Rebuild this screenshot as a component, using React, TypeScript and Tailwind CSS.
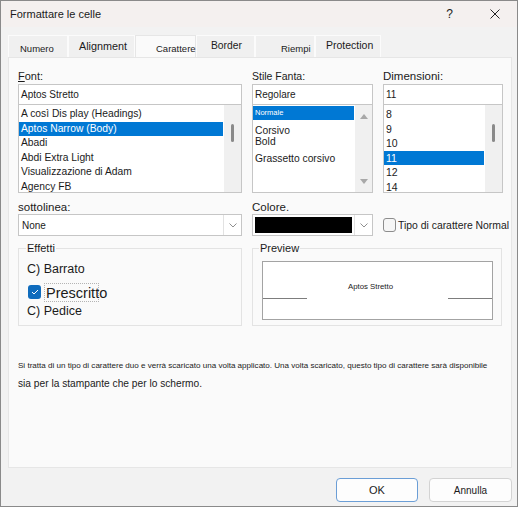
const fontList = [
  "A così Dis play (Headings)",
  "Aptos Narrow (Body)",
  "Abadi",
  "Abdi Extra Light",
  "Visualizzazione di Adam",
  "Agency FB",
];

const sizeList = ["8", "9", "10", "11", "12", "14"];

const tabs = [
  { label: "Numero", w: "w-[60px]", pl: "pl-[11px]", pt: "pt-[6px]", size: "text-[9.5px]" },
  { label: "Alignment", w: "w-[67px]", pl: "pl-[10px]", pt: "pt-[2px]", size: "text-[10.8px]" },
  { label: "Carattere", w: "w-[61px]", pl: "pl-[20px]", pt: "pt-[6px]", size: "text-[9.5px]", active: true },
  { label: "Border", w: "w-[59px]", pl: "pl-[14px]", pt: "pt-[2px]", size: "text-[10.3px]" },
  { label: "Riempi", w: "w-[60px]", pl: "pl-[25px]", pt: "pt-[6px]", size: "text-[9.5px]" },
  { label: "Protection", w: "w-[66px]", pl: "pl-[10px]", pt: "pt-[2px]", size: "text-[10.5px]" },
];

function Chevron() {
  return (
    <svg width="8" height="5" viewBox="0 0 8 5">
      <path d="M0.5 0.5 L4 4 L7.5 0.5" stroke="#8f8f8f" strokeWidth="1" fill="none" />
    </svg>
  );
}

function ThumbTrack() {
  return (
    <div className="w-[17px] bg-[#f0f0f0] flex flex-col items-center">
      <div className="mt-[19px] w-[3px] h-[18px] rounded-full bg-[#8a8a8a]" />
    </div>
  );
}

function ArrowTrack() {
  return (
    <div className="w-[17px] bg-[#f0f0f0] flex flex-col items-center justify-between pt-[9px] pb-[8px]">
      <svg width="8" height="5" viewBox="0 0 8 5">
        <path d="M0 5 L4 0 L8 5Z" fill="#a8a8a8" />
      </svg>
      <svg width="8" height="5" viewBox="0 0 8 5">
        <path d="M0 0 L4 5 L8 0Z" fill="#a8a8a8" />
      </svg>
    </div>
  );
}

export default function App() {
  return (
    <div className="w-[518px] h-[507px] bg-[#f2f2f2] border border-[#8a8a8a] flex flex-col overflow-hidden font-['Liberation_Sans',Arial,sans-serif] text-[#1b1b1b]">
      {/* Title bar */}
      <div className="h-[26px] bg-[#f4f0ef] flex items-center pl-[9px] pr-[17px]">
        <span className="text-[11px]">Formattare le celle</span>
        <span className="ml-auto text-[12px]">?</span>
        <svg className="ml-[37px]" width="10" height="10" viewBox="0 0 10 10">
          <path d="M0.5 0.5 L9.5 9.5 M9.5 0.5 L0.5 9.5" stroke="#222" strokeWidth="1" />
        </svg>
      </div>

      {/* Tabs */}
      <div className="mt-[8px] ml-[7px] flex h-[22px]">
        {tabs.map((t) => (
          <div
            key={t.label}
            className={
              t.active
                ? `${t.w} ${t.pl} ${t.pt} ${t.size} h-full bg-[#fafafa] border-x border-t border-[#e6e6e6] whitespace-nowrap`
                : `${t.w} ${t.pl} ${t.pt} ${t.size} h-full bg-[#f0f0f0] border-x border-t border-[#fbfbfb] whitespace-nowrap`
            }
          >
            {t.label}
          </div>
        ))}
      </div>

      {/* Panel */}
      <div className="ml-[7px] w-[504px] h-[411px] bg-[#fafafa] border border-[#e6e6e6] pt-[10px] px-[9px]">
        <div className="grid grid-cols-[224px_121px_120px] gap-x-[10px]">
          {/* Font */}
          <div>
            <div className="h-[16px] leading-[16px] text-[11px]">
              <span className="underline">F</span>ont:
            </div>
            <div className="h-[21px] bg-white border border-[#c6c6c6] px-[2px] flex items-center text-[10px]">
              Aptos Stretto
            </div>
            <div className="h-[88px] bg-white border border-t-0 border-[#c6c6c6] flex">
              <div className="flex-1 pt-[2px] text-[10.3px] whitespace-nowrap">
                {fontList.map((f, i) => (
                  <div
                    key={f}
                    className={
                      i === 1
                        ? "h-[14.5px] leading-[14.5px] pl-[2px] bg-[#0078d4] text-white mr-[1px]"
                        : "h-[14.5px] leading-[14.5px] pl-[2px]"
                    }
                  >
                    {f}
                  </div>
                ))}
              </div>
              <ThumbTrack />
            </div>
          </div>

          {/* Style */}
          <div>
            <div className="h-[16px] leading-[16px] text-[10.5px]">Stile Fanta:</div>
            <div className="h-[21px] bg-white border border-[#c6c6c6] px-[2px] flex items-center text-[10px]">
              Regolare
            </div>
            <div className="h-[88px] bg-white border border-t-0 border-[#c6c6c6] flex">
              <div className="flex-1 pt-[1px] text-[10.3px] whitespace-nowrap">
                <div className="h-[14px] leading-[14px] pl-[2px] bg-[#0078d4] text-white text-[7.5px] mr-[1px]">
                  Normale
                </div>
                <div className="mt-[5px] h-[11px] leading-[11px] pl-[2px]">Corsivo</div>
                <div className="h-[12px] leading-[12px] pl-[2px]">Bold</div>
                <div className="h-[22px] leading-[22px] pl-[2px]">Grassetto corsivo</div>
              </div>
              <ArrowTrack />
            </div>
          </div>

          {/* Size */}
          <div>
            <div className="h-[16px] leading-[16px] text-[11.5px]">Dimensioni:</div>
            <div className="h-[21px] bg-white border border-[#c6c6c6] px-[2px] flex items-center text-[10px]">
              11
            </div>
            <div className="h-[88px] bg-white border border-t-0 border-[#c6c6c6] flex">
              <div className="flex-1 pt-[2px] text-[10.5px]">
                {sizeList.map((s) => (
                  <div
                    key={s}
                    className={
                      s === "11"
                        ? "h-[14.5px] leading-[14.5px] pl-[2px] bg-[#0078d4] text-white mr-[1px]"
                        : "h-[14.5px] leading-[14.5px] pl-[2px]"
                    }
                  >
                    {s}
                  </div>
                ))}
              </div>
              <ThumbTrack />
            </div>
          </div>
        </div>

        {/* Underline / colour row */}
        <div className="mt-[7px] grid grid-cols-[224px_121px_120px] gap-x-[10px]">
          <div>
            <div className="h-[14px] leading-[14px] text-[11.5px]">sottolinea:</div>
            <div className="h-[22px] bg-white border border-[#c6c6c6] flex">
              <div className="flex-1 px-[3px] flex items-center text-[10px]">None</div>
              <div className="w-[18px] border-l border-[#e2e2e2] flex items-center justify-center">
                <Chevron />
              </div>
            </div>
          </div>
          <div>
            <div className="h-[14px] leading-[14px] text-[11.5px]">Colore.</div>
            <div className="h-[22px] bg-white border border-[#c6c6c6] flex">
              <div className="flex-1 p-[2px]">
                <div className="h-full bg-black" />
              </div>
              <div className="w-[18px] border-l border-[#e2e2e2] flex items-center justify-center">
                <Chevron />
              </div>
            </div>
          </div>
          <div>
            <div className="h-[14px]" />
            <div className="h-[22px] flex items-center whitespace-nowrap">
              <div className="shrink-0 w-[13px] h-[14px] rounded-[3px] border border-[#8d8d8d] bg-[#f6f6f6]" />
              <span className="ml-[2px] mt-[2px] text-[10.4px]">Tipo di carattere Normal</span>
            </div>
          </div>
        </div>

        {/* Effects and preview */}
        <div className="mt-[12px] grid grid-cols-[224px_250px] gap-x-[10px]">
          <div className="relative h-[78px] border border-[#e3e3e3]">
            <span className="absolute left-[7px] -top-[8px] px-[1px] bg-[#fafafa] text-[11px] leading-[14px]">
              Effetti
            </span>
            <div className="mt-[12px] h-[16px] leading-[16px] pl-[8px] text-[12.5px]">C) Barrato</div>
            <div className="mt-[5px] h-[20px] flex items-center pl-[9px] whitespace-nowrap">
              <div className="shrink-0 w-[13px] h-[14px] rounded-[3px] bg-[#0f6cbd] flex items-center justify-center">
                <svg width="8" height="6" viewBox="0 0 8 6">
                  <path d="M1 3 L3 5 L7 1" stroke="white" strokeWidth="1" fill="none" />
                </svg>
              </div>
              <span className="ml-[3px] w-[55px] h-[19px] border border-dotted border-[#b4b4b4] pl-[1px] text-[14.5px] leading-[18px]">
                Prescritto
              </span>
            </div>
            <div className="mt-[1px] h-[16px] leading-[16px] pl-[8px] text-[12.5px]">C) Pedice</div>
          </div>

          <div className="relative h-[78px] border border-[#e3e3e3]">
            <span className="absolute left-[6px] -top-[8px] px-[1px] bg-[#fafafa] text-[11px] leading-[14px]">
              Preview
            </span>
            <div className="mt-[12px] ml-[9px] w-[231px] h-[59px] bg-white border border-[#a3a3a3] flex flex-col">
              <div className="mt-[19px] pr-[14px] text-center text-[7.8px] leading-[12px]">Aptos Stretto</div>
              <div className="mt-[5px] h-[1px] flex justify-between">
                <span className="w-[44px] bg-[#7d7d7d]" />
                <span className="w-[44px] bg-[#7d7d7d]" />
              </div>
            </div>
          </div>
        </div>

        {/* Note */}
        <p className="mt-[34px] text-[8.05px] leading-[12px] whitespace-nowrap">
          Si tratta di un tipo di carattere duo e verrà scaricato una volta applicato. Una volta scaricato, questo tipo di carattere sarà disponibile
        </p>
        <p className="mt-[6px] text-[10.2px] leading-[12px] whitespace-nowrap">
          sia per la stampante che per lo schermo.
        </p>
      </div>

      {/* Buttons */}
      <div className="mt-[10px] mr-[5px] flex justify-end gap-[11px]">
        <button className="w-[82px] h-[24px] bg-[#fdfdfd] border border-[#6b9ed6] rounded-[4px] text-[11px]">
          OK
        </button>
        <button className="w-[83px] h-[24px] bg-[#fdfdfd] border border-[#d3d3d3] rounded-[4px] text-[10px]">
          Annulla
        </button>
      </div>
    </div>
  );
}
